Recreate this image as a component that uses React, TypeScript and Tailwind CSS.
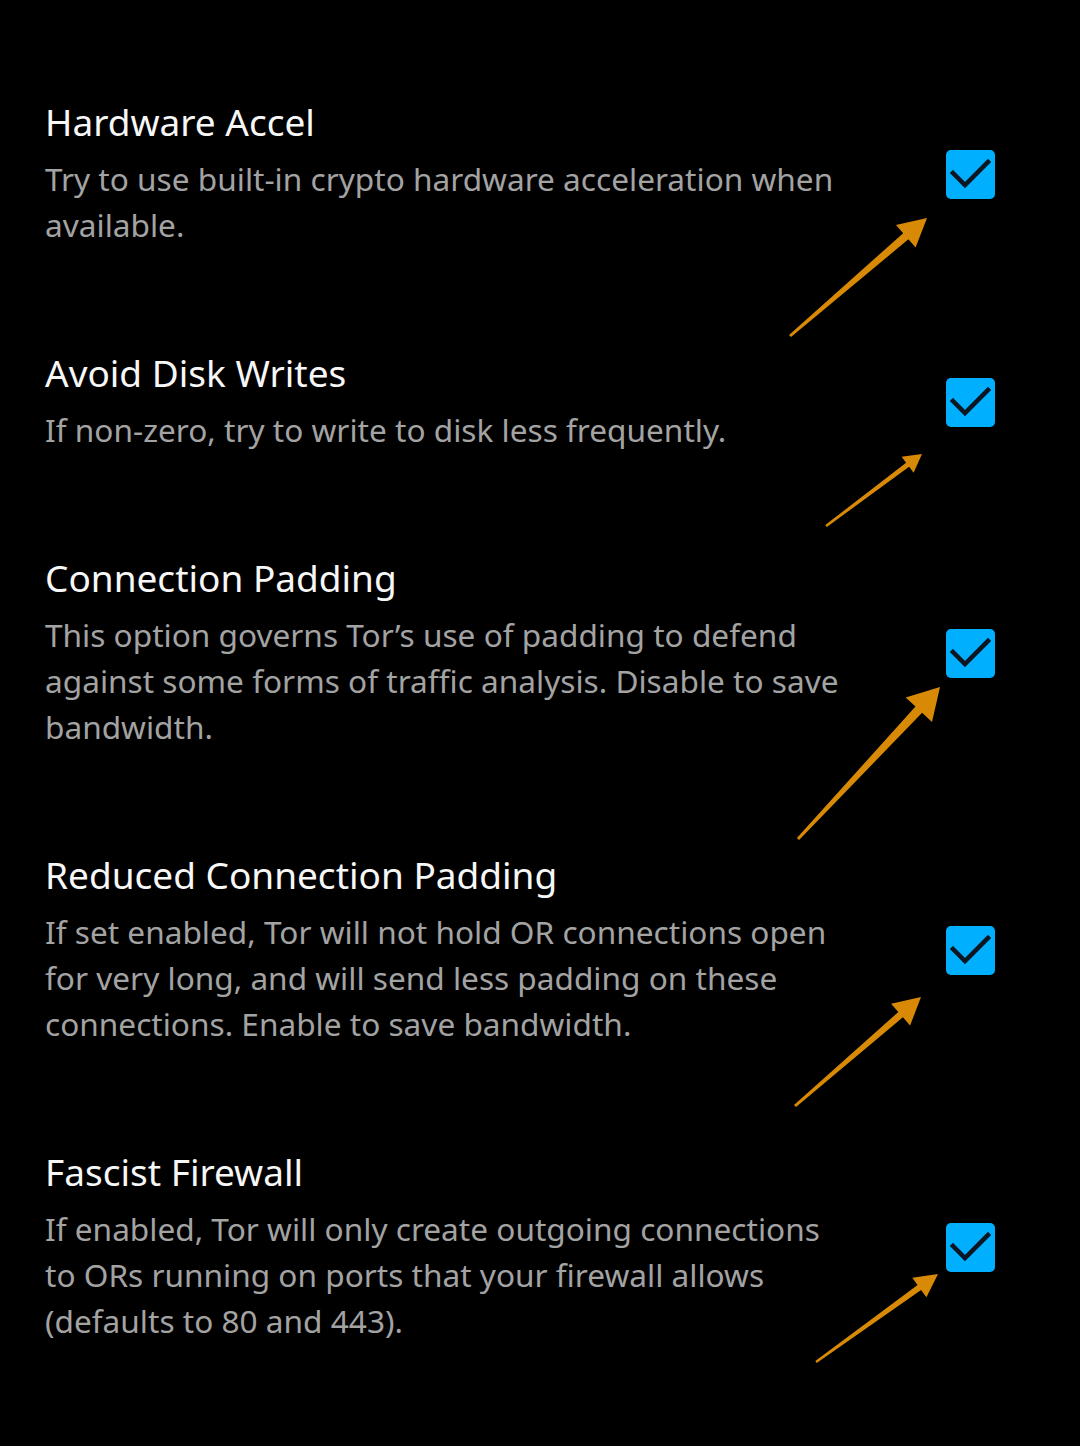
import React from "react";

type Item = { title: string; desc: string };

const items: Item[] = [
  {
    title: "Hardware Accel",
    desc: "Try to use built-in crypto hardware acceleration when available.",
  },
  {
    title: "Avoid Disk Writes",
    desc: "If non-zero, try to write to disk less frequently.",
  },
  {
    title: "Connection Padding",
    desc: "This option governs Tor\u2019s use of padding to defend against some forms of traffic analysis. Disable to save bandwidth.",
  },
  {
    title: "Reduced Connection Padding",
    desc: "If set enabled, Tor will not hold OR connections open for very long, and will send less padding on these connections. Enable to save bandwidth.",
  },
  {
    title: "Fascist Firewall",
    desc: "If enabled, Tor will only create outgoing connections to ORs running on ports that your firewall allows (defaults to 80 and 443).",
  },
];

type Arrow = {
  tail: [number, number];
  tip: [number, number];
  headLen: number;
  headW: number;
  shaftTail: number;
  shaftHead: number;
};

const arrows: Arrow[] = [
  { tail: [790, 336], tip: [927, 218], headLen: 28, headW: 30, shaftTail: 3, shaftHead: 8 },
  { tail: [826, 526], tip: [922, 454], headLen: 18, headW: 20, shaftTail: 2.5, shaftHead: 5 },
  { tail: [798, 839], tip: [940, 687], headLen: 31, headW: 36, shaftTail: 3, shaftHead: 9 },
  { tail: [795, 1106], tip: [921, 997], headLen: 27, headW: 29, shaftTail: 3, shaftHead: 7 },
  { tail: [816, 1362], tip: [938, 1274], headLen: 23, headW: 24, shaftTail: 2.5, shaftHead: 6 },
];

function arrowPoints(a: Arrow): string {
  const [tx, ty] = a.tail;
  const [px, py] = a.tip;
  const dx = px - tx;
  const dy = py - ty;
  const len = Math.hypot(dx, dy);
  const ux = dx / len;
  const uy = dy / len;
  const nx = -uy;
  const ny = ux;
  const bx = px - ux * a.headLen;
  const by = py - uy * a.headLen;
  const pts: [number, number][] = [
    [tx + (nx * a.shaftTail) / 2, ty + (ny * a.shaftTail) / 2],
    [bx + (nx * a.shaftHead) / 2, by + (ny * a.shaftHead) / 2],
    [bx + (nx * a.headW) / 2, by + (ny * a.headW) / 2],
    [px, py],
    [bx - (nx * a.headW) / 2, by - (ny * a.headW) / 2],
    [bx - (nx * a.shaftHead) / 2, by - (ny * a.shaftHead) / 2],
    [tx - (nx * a.shaftTail) / 2, ty - (ny * a.shaftTail) / 2],
  ];
  return pts.map((p) => `${p[0].toFixed(1)},${p[1].toFixed(1)}`).join(" ");
}

function CheckBox() {
  return (
    <div className="w-[49px] h-[49px] rounded-[5px] bg-[#00b0ff] flex items-center justify-center shrink-0">
      <svg width="49" height="49" viewBox="0 0 49 49">
        <path
          d="M7 23 L19 35 L42 12"
          fill="none"
          stroke="#0b1622"
          strokeWidth="4.5"
          strokeLinecap="square"
          strokeLinejoin="miter"
        />
      </svg>
    </div>
  );
}

export default function App() {
  return (
    <div
      className="relative w-[1080px] h-[1446px] bg-black overflow-hidden"
      style={{ fontFamily: '"Noto Sans", "Open Sans", sans-serif' }}
    >
      <div className="flex flex-col gap-[103px] pt-[100px] pl-[45px] pr-[85px]">
        {items.map((it) => (
          <div key={it.title} className="flex items-center">
            <div className="w-[805px] flex flex-col gap-[12px]">
              <div className="text-[37px] leading-[44px] text-[#f7f7f7]">{it.title}</div>
              <div className="text-[31.6px] leading-[46px] text-[#a3a3a3]">{it.desc}</div>
            </div>
            <div className="ml-auto">
              <CheckBox />
            </div>
          </div>
        ))}
      </div>
      <svg
        className="absolute inset-0 pointer-events-none"
        width="1080"
        height="1446"
        viewBox="0 0 1080 1446"
      >
        {arrows.map((a, i) => (
          <polygon key={i} points={arrowPoints(a)} fill="#d88a06" />
        ))}
      </svg>
    </div>
  );
}
